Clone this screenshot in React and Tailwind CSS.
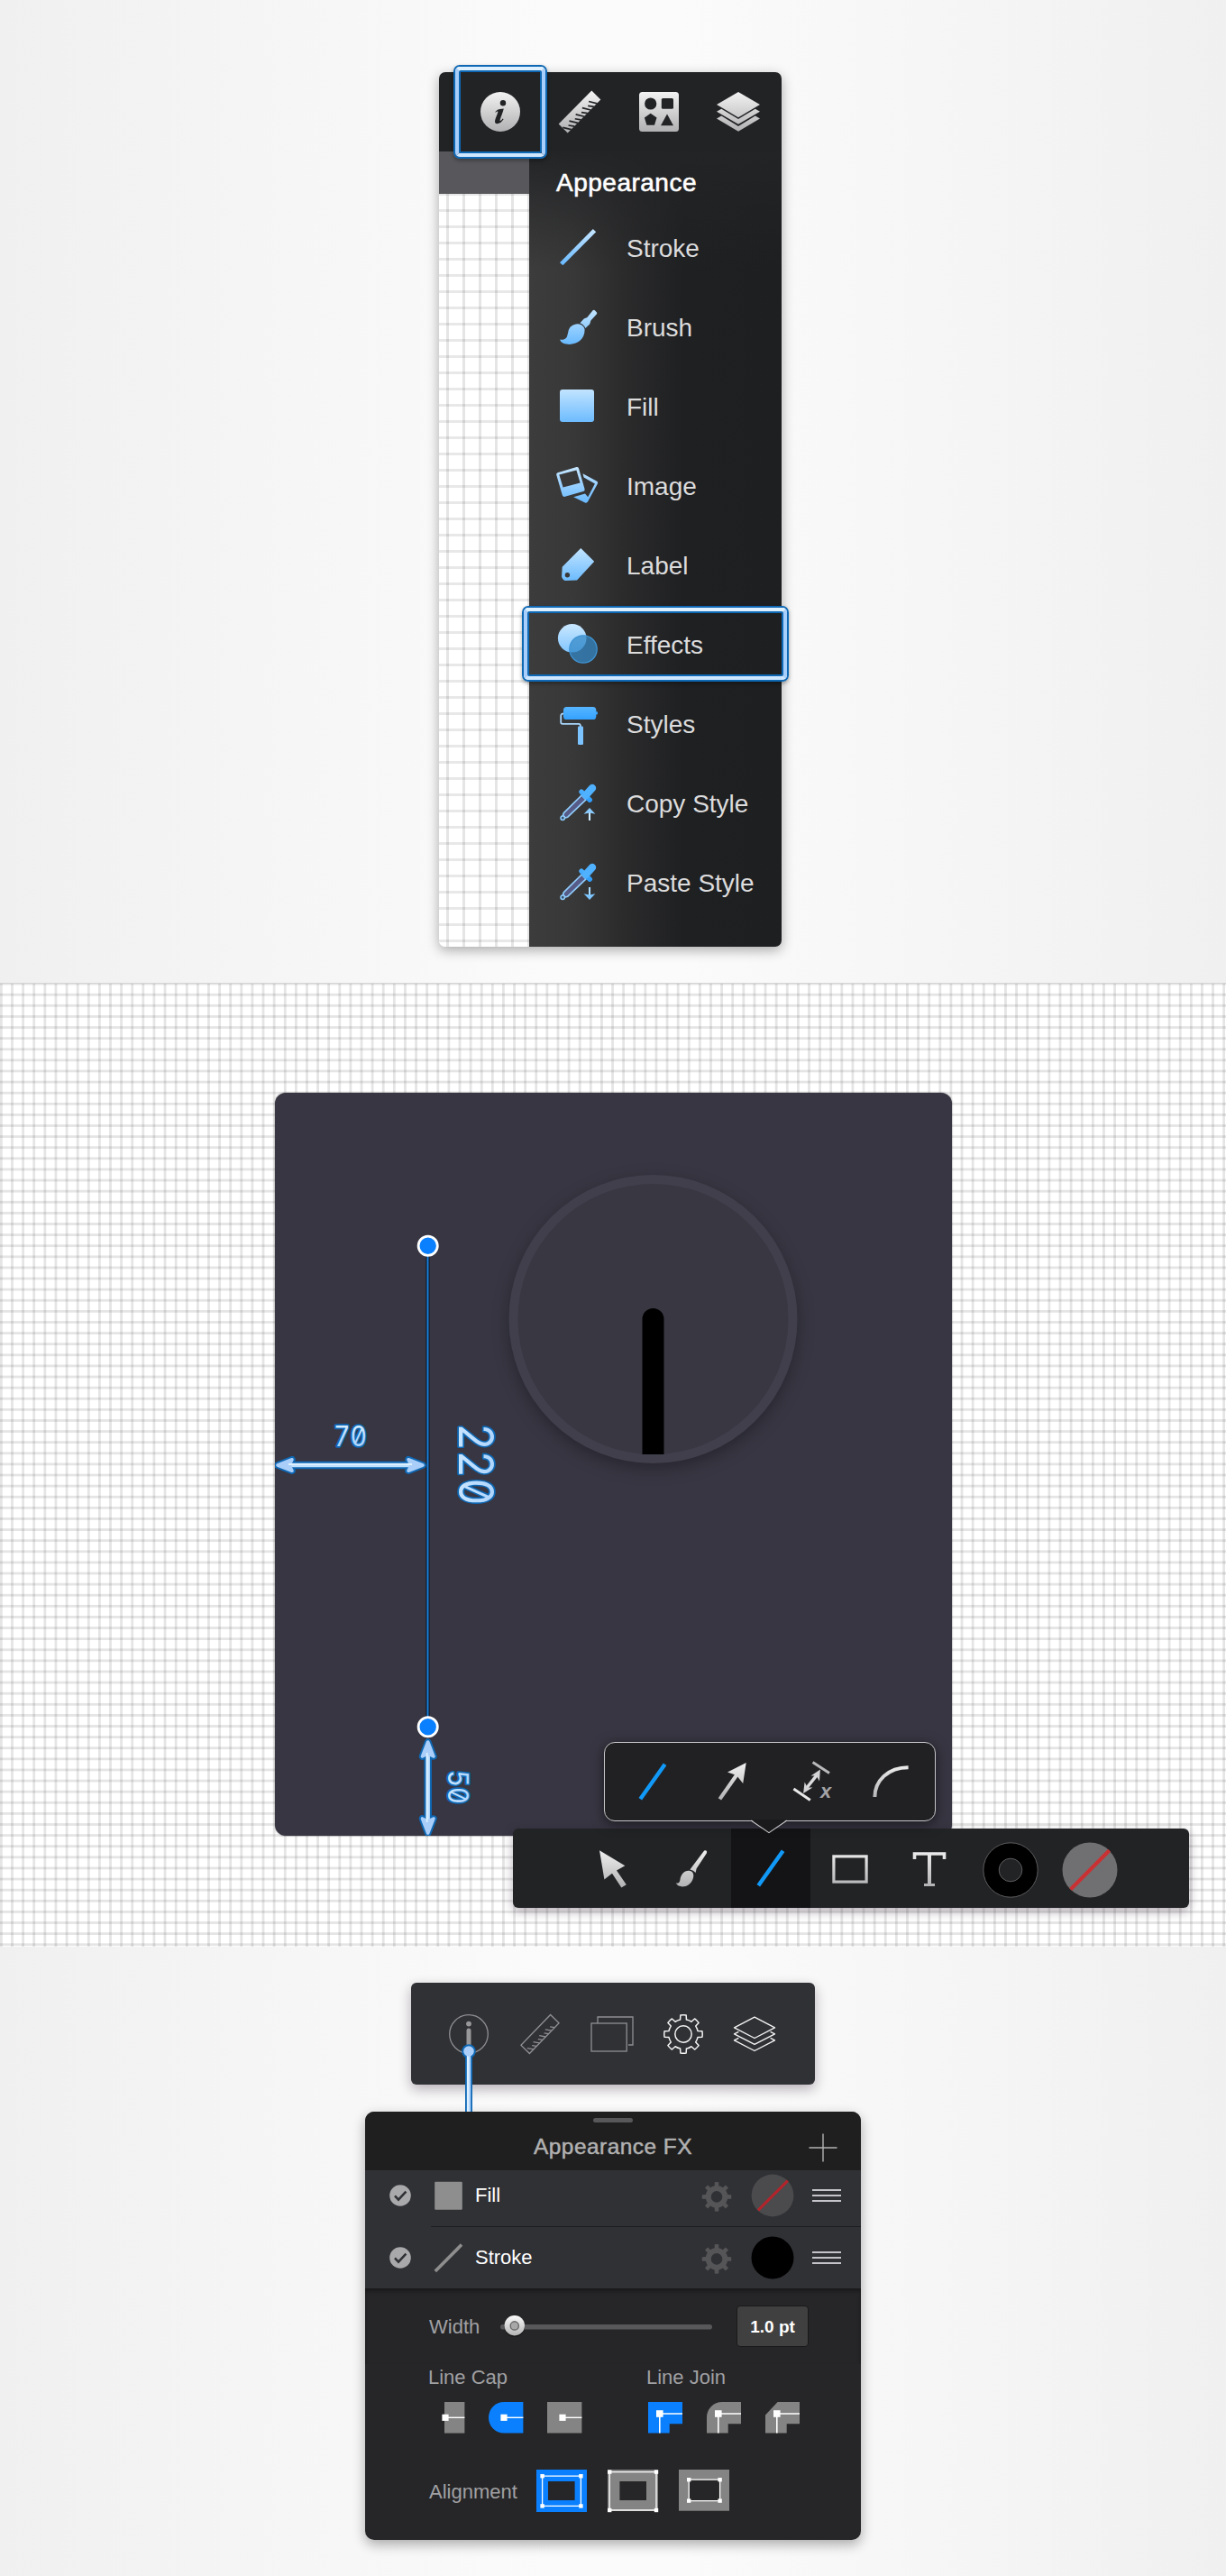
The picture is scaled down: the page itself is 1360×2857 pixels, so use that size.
import React from "react";

const SANS = "font-['Liberation_Sans',Arial,sans-serif]";

function Defs() {
  return (
    <svg width="0" height="0" className="absolute" aria-hidden="true">
      <defs>
        <linearGradient id="silver" gradientUnits="userSpaceOnUse" x1="0" y1="2" x2="0" y2="46">
          <stop offset="0" stopColor="#f2f2f3" />
          <stop offset="1" stopColor="#b0b0b2" />
        </linearGradient>
        <linearGradient id="sky" gradientUnits="userSpaceOnUse" x1="0" y1="4" x2="0" y2="45">
          <stop offset="0" stopColor="#c6e6ff" />
          <stop offset="1" stopColor="#66b8ff" />
        </linearGradient>
        <linearGradient id="azure" gradientUnits="userSpaceOnUse" x1="0" y1="4" x2="0" y2="22">
          <stop offset="0" stopColor="#5cb8ff" />
          <stop offset="1" stopColor="#2f9fff" />
        </linearGradient>
        <linearGradient id="thumb" x1="0" y1="0" x2="0" y2="1">
          <stop offset="0" stopColor="#fbfbfb" />
          <stop offset="1" stopColor="#b4b4b4" />
        </linearGradient>
        <linearGradient id="ice" x1="0" y1="0" x2="0" y2="1">
          <stop offset="0" stopColor="#e6f5ff" />
          <stop offset="0.6" stopColor="#b4d9fd" />
          <stop offset="1" stopColor="#a4ccfa" />
        </linearGradient>
        <linearGradient id="iceSide" x1="0" y1="1" x2="0" y2="0">
          <stop offset="0" stopColor="#cfe9ff" />
          <stop offset="1" stopColor="#a9d1fc" />
        </linearGradient>
      </defs>
    </svg>
  );
}

function Icon({ children, size = 48 }) {
  return (
    <svg width={size} height={size} viewBox={`0 0 ${size} ${size}`} fill="none" className="block shrink-0 overflow-visible">
      {children}
    </svg>
  );
}

/* ---------- top inspector ---------- */

function InfoSolid() {
  return (
    <Icon>
      <circle cx="24" cy="24" r="22" fill="url(#silver)" />
      <circle cx="27" cy="14.3" r="3.2" fill="#222325" />
      <path
        d="M18.3 24.2C20 21.8 22.6 20.7 25.8 20.7L27.8 20.4C27 24.5 24.3 30 23.6 33.2C23.3 34.6 24.4 34.6 26.6 31.6L27.6 32.3C25.4 35.6 22.8 37.3 20.4 37.2C18.2 37.1 17.6 35.5 18.2 33.2C18.9 30.4 20.6 27 21.3 24.6C21.7 23.2 20.4 23.2 18.9 24.8Z"
        fill="#222325"
      />
    </Icon>
  );
}

const SOLID_TICKS = [-20.5, -15.4, -10.3, -5.2, -0.1, 5, 10.1, 15.2, 20.3];

function RulerSolid() {
  return (
    <Icon>
      <path d="M37.3 .5L47.3 10.5L10.7 47.5L.7 37.5Z" fill="url(#silver)" />
      <g transform="translate(24 24) rotate(-45)">
        {SOLID_TICKS.map((x, i) => (
          <path key={x} d={`M${x} 7.3L${x - (i % 2 ? 4 : 5)} ${i % 2 ? 1.8 : -1}`} stroke="#222325" strokeWidth="1.7" />
        ))}
      </g>
    </Icon>
  );
}

function ShapesSolid() {
  return (
    <Icon>
      <rect x="2" y="2" width="44" height="44" rx="3.5" fill="url(#silver)" />
      <g fill="#222325">
        <circle cx="14.7" cy="15" r="6.6" />
        <rect x="26.8" y="9" width="13.2" height="11.8" rx="1.6" />
        <path d="M14.7 25.7L21.5 30.6L19 38.8H10.4L7.9 30.6Z" />
        <path d="M33 26.5L40 39.2H26Z" />
      </g>
    </Icon>
  );
}

function LayersSolid() {
  return (
    <Icon>
      <g fill="url(#silver)">
        <path d="M24 2L48 16L24 30.2L0 16Z" />
        <path d="M0 23.7L5.2 20.7L24 32L42.8 20.7L48 23.7L24 37.8Z" />
        <path d="M0 31.5L5.2 28.5L24 40L42.8 28.5L48 31.5L24 45.8Z" />
      </g>
    </Icon>
  );
}

function StrokeIcon() {
  return (
    <Icon>
      <path d="M5 41.2L41.8 4.1L45.2 7.3L8.4 44.2Z" fill="url(#sky)" />
    </Icon>
  );
}

function BrushIcon() {
  return (
    <Icon>
      <path d="M41.6 6.2Q42.6 5.4 43.6 6L46 8.4Q46.6 9.4 45.8 10.4L39.4 17.6L38.2 21.4L33.4 26Q32 22.2 27.4 20.3L31.8 15.6L35.4 14Z" fill="url(#sky)" />
      <path d="M26.2 21.4C30 22 32.5 24.5 32.6 28C32.6 38 24.5 43.8 15.5 43.9C10.5 43.9 6.6 43 5 38.6C8 39.2 11.6 38.3 12.9 35.4C14.6 31.4 14 26.5 17.8 23.8C20.2 22 23.2 21 26.2 21.4Z" fill="url(#sky)" />
    </Icon>
  );
}

function FillIcon() {
  return (
    <Icon>
      <rect x="5" y="6" width="38" height="36" rx="3" fill="url(#sky)" />
    </Icon>
  );
}

function ImageIcon() {
  return (
    <Icon>
      <path
        fillRule="evenodd"
        d="M2.5 10.2L23.5 4.1Q25.4 3.7 26 5.5L32.6 28.4Q33 30.4 31 31L10.8 36.8Q8.6 37.3 7.8 35.2L1.2 12.6Q.9 10.8 2.5 10.2ZM4.3 12.5L8.6 26.6L27.6 21.4L23.4 7.4Z"
        fill="url(#sky)"
      />
      <path d="M30.5 11.2L46.2 19.8Q47.8 20.8 46.9 22.4L36 42.6Q34.8 44.3 33 43.4L20.2 37.2L33 33.6L36.2 37.2L43.9 22.6L31.6 15.6Z" fill="url(#sky)" />
    </Icon>
  );
}

function LabelIcon() {
  return (
    <Icon>
      <path fillRule="evenodd" d="M28.3 6L43.2 20.7L24 41.4L11.4 42.1Q10 42.1 9 41L7.6 39Q7 38 7.1 37L7.7 26.7ZM13.4 33A2.7 2.7 0 1 0 13.4 38.4A2.7 2.7 0 1 0 13.4 33Z" fill="url(#sky)" />
    </Icon>
  );
}

function EffectsIcon() {
  return (
    <Icon>
      <circle cx="18.7" cy="17.8" r="15.8" fill="url(#sky)" />
      <circle cx="31" cy="30" r="15.2" fill="#3388c8" fillOpacity=".74" stroke="#3f94d4" strokeWidth="1.3" />
    </Icon>
  );
}

function StylesIcon() {
  return (
    <Icon>
      <path d="M9.5 13.3Q6.2 13.3 6.2 16V23Q6.2 24.9 8 24.9H26Q28 24.9 28 28" stroke="#a9d6fb" strokeWidth="1.8" />
      <rect x="44" y="11.2" width="3" height="3.4" rx="1" fill="#3aa5ff" />
      <rect x="9" y="6" width="36.3" height="14" rx="3.6" fill="url(#azure)" />
      <rect x="25" y="27.6" width="6" height="20.4" rx="1.2" fill="#7cc4ff" />
    </Icon>
  );
}

function Dropper({ down }) {
  return (
    <Icon>
      <path d="M29.2 16L9.4 35.6L8.4 38.4L11.2 41L13.8 40.2L34 20.8Z" fill="#565c87" stroke="#8fcbfb" strokeWidth="1.7" strokeLinejoin="round" />
      <circle cx="8.2" cy="41.2" r="2.2" fill="#35506b" stroke="#8fcbfb" strokeWidth="1.5" />
      <path d="M29 12.2L38.3 21.2" stroke="url(#azure)" strokeWidth="5.4" strokeLinecap="round" />
      <path d="M41 8L33.8 16" stroke="#4fb1ff" strokeWidth="8.4" strokeLinecap="round" />
      {down ? (
        <g>
          <path d="M38 30V40" stroke="#a6dbff" strokeWidth="2.1" />
          <path d="M31.6 37.2L38 38.4L44.4 37.2L38 44Z" fill="#7cc5ff" />
        </g>
      ) : (
        <g>
          <path d="M38 34V44" stroke="#cdebff" strokeWidth="2.1" />
          <path d="M31.6 36.8L38 35.6L44.4 36.8L38 30Z" fill="#8accff" />
        </g>
      )}
    </Icon>
  );
}

const MENU = [
  { label: "Stroke", icon: <StrokeIcon /> },
  { label: "Brush", icon: <BrushIcon /> },
  { label: "Fill", icon: <FillIcon /> },
  { label: "Image", icon: <ImageIcon /> },
  { label: "Label", icon: <LabelIcon /> },
  { label: "Effects", icon: <EffectsIcon />, active: true },
  { label: "Styles", icon: <StylesIcon /> },
  { label: "Copy Style", icon: <Dropper /> },
  { label: "Paste Style", icon: <Dropper down /> },
];

function Ring({ className }) {
  return (
    <div className={`pointer-events-none absolute rounded-[7px] border-2 border-[#0f68b4] shadow-[0_2px_4px_rgba(0,0,0,.35)] ${className}`}>
      <div className="h-full rounded-[5px] border-4 border-x-[#a8cffb] border-t-[#dff1ff] border-b-[#cfe6ff]">
        <div className="h-full rounded-[2px] border-2 border-[#0f68b4]" />
      </div>
    </div>
  );
}

function Cell({ children, className = "w-[88px]" }) {
  return <div className={`flex items-center justify-center ${className}`}>{children}</div>;
}

function Inspector() {
  return (
    <div className="flex h-[970px] w-[380px] flex-col rounded-[7px] shadow-[0_4px_14px_rgba(0,0,0,.32)]">
      <div className="flex h-[88px] rounded-t-[7px] bg-[#222325] pl-6">
        <Cell className="relative w-[88px]">
          <InfoSolid />
          <Ring className="-top-2 -left-2 h-[104px] w-[104px]" />
        </Cell>
        <Cell><RulerSolid /></Cell>
        <Cell><ShapesSolid /></Cell>
        <Cell><LayersSolid /></Cell>
      </div>
      <div className="flex flex-1">
        <div className="flex w-[100px] flex-col overflow-hidden rounded-bl-[7px]">
          <div className="h-[47px] bg-[#58585c]" />
          <div className="flex-1 bg-white bg-[linear-gradient(to_right,rgba(0,0,0,.1)_3px,transparent_3px),linear-gradient(to_bottom,rgba(0,0,0,.09)_3px,transparent_3px)] bg-size-[18px_18px] bg-position-[8px_17px]" />
        </div>
        <div className="w-[280px] rounded-br-[7px] bg-[linear-gradient(to_right,#3c3c3c_0,#383838_50px,#2b2b2c_105px,#1f2022_170px,#1e1f21_100%)]">
          <div className="h-full rounded-br-[7px] bg-[linear-gradient(to_bottom,#232426_0,rgba(35,36,38,.5)_60px,transparent_130px)]">
            <h2 className="flex h-[62px] items-center pt-[7px] pl-[30px] text-[28px] leading-none tracking-[.5px] text-white [-webkit-text-stroke:.6px_white]">
              Appearance
            </h2>
            <ul>
              {MENU.map((m) => (
                <li key={m.label} className="relative flex h-[88px] items-center pl-[29px]">
                  {m.icon}
                  <span className="pt-[3px] pl-[31px] text-[28px] leading-none whitespace-nowrap text-[#dcdcdd]">{m.label}</span>
                  {m.active && <Ring className="top-[2px] -left-2 h-[84px] w-[296px]" />}
                </li>
              ))}
            </ul>
          </div>
        </div>
      </div>
    </div>
  );
}

/* ---------- canvas ---------- */

function DimArrow({ x, y, length, vertical }) {
  const l = length;
  const d = `M10 0H${l - 10}`;
  const heads = `M2 0L18 -6.2L15 0L18 6.2ZM${l - 2} 0L${l - 18} -6.2L${l - 15} 0L${l - 18} 6.2Z`;
  return (
    <g transform={`translate(${x} ${y})${vertical ? " rotate(90)" : ""}`} strokeLinejoin="round">
      <path d={d} stroke="#0f68b4" strokeWidth="8.5" />
      <path d={heads} stroke="#0f68b4" strokeWidth="7.6" />
      <path d={d} stroke="#bfe0ff" strokeWidth="4.4" />
      <path d={heads} fill="#a9cef9" stroke="#a9cef9" strokeWidth="3.6" />
      <path d={`M14 ${vertical ? 1 : -1}H${l - 14}`} stroke="#dcf0ff" strokeWidth="1.8" />
    </g>
  );
}

function DimText({ x, y, size, length, rotate, children }) {
  return (
    <text
      transform={`translate(${x} ${y})${rotate ? " rotate(90)" : ""}`}
      fontSize={size}
      textLength={length}
      lengthAdjust="spacingAndGlyphs"
      fill={rotate ? "url(#iceSide)" : "url(#ice)"}
      stroke="#0f68b4"
      strokeWidth="3.6"
      strokeLinejoin="round"
      className="font-['Inter',sans-serif] [font-feature-settings:'zero'_1,'tnum'_1] [paint-order:stroke]"
    >
      {children}
    </text>
  );
}

function Artboard() {
  return (
    <div className="h-[824px] w-[751px] overflow-hidden rounded-[12px] bg-[#373642] shadow-[0_0_2px_rgba(0,0,0,.5)]">
      <svg width="751" height="824" viewBox="304.5 1212 751 824" fill="none" className="block">
        <g className="[filter:drop-shadow(0_6px_9px_rgba(0,0,0,.28))]">
          <circle cx="724" cy="1463" r="155" fill="#393742" stroke="#403f4b" strokeWidth="10" />
        </g>
        <path d="M712 1613V1463A12 12 0 0 1 736 1463V1613Z" fill="#000" />
        <path d="M474 1382V1915" stroke="#0b1420" strokeWidth="4" />
        <path d="M474 1382V1915" stroke="#1c7fdc" strokeWidth="2" />
        <g fill="#0a80ff" stroke="#fff" strokeWidth="2.8">
          <circle cx="474.2" cy="1381.7" r="10.6" />
          <circle cx="474.2" cy="1915.3" r="10.6" />
        </g>
        <DimArrow x="305.5" y="1625" length={165} />
        <DimArrow x="474.2" y="1930" length={105} vertical />
        <DimText x="369.5" y="1603.5" size="31" length="37">70</DimText>
        <DimText x="508" y="1578.5" size="53" length="91" rotate>220</DimText>
        <DimText x="496.5" y="1963" size="31" length="38" rotate>50</DimText>
      </svg>
    </div>
  );
}

function LineTool() {
  return (
    <Icon>
      <path d="M10.3 43.3L37.6 4.8" stroke="#1199f7" strokeWidth="4.4" />
    </Icon>
  );
}

function Popover() {
  return (
    <div className="absolute -top-24 left-[101px] flex h-[88px] w-[368px] rounded-[12px] border border-[#c6c6c8] bg-[#212123] px-[9px] shadow-[0_3px_14px_rgba(0,0,0,.5)]">
      <Cell className="w-[88px] flex-none"><LineTool /></Cell>
      <Cell className="w-[88px] flex-none">
        <Icon>
          <path d="M10.4 43.4L29.6 16" stroke="url(#silver)" strokeWidth="4.2" />
          <path d="M39.7 3L19 13.6L29 17L36.2 26Z" fill="url(#silver)" />
        </Icon>
      </Cell>
      <Cell className="w-[88px] flex-none">
        <Icon>
          <path d="M25.6 2.6L44 14.6" stroke="#b9b9bb" strokeWidth="3" />
          <path d="M4.4 32L22.8 44.4" stroke="#e9e9ea" strokeWidth="3" />
          <path d="M18 32L31 15.6" stroke="#dcdcde" strokeWidth="3.4" />
          <path d="M33.9 10.4L23.6 17.4L29.6 17.6L33 23.4ZM15.1 37L25.4 30.4L19.6 30.4L16.6 24.4Z" fill="#d4d4d6" />
          <text x="34" y="41.6" fontSize="22" fontWeight="700" fontStyle="italic" fill="#a3a3a6">x</text>
        </Icon>
      </Cell>
      <Cell className="w-[88px] flex-none">
        <Icon>
          <path d="M6.4 41C6.4 23 21 8.2 43.6 8.2" stroke="url(#silver)" strokeWidth="4" />
        </Icon>
      </Cell>
      <svg width="42" height="16" viewBox="0 0 42 16" fill="none" className="absolute -bottom-[15px] left-[161px]">
        <path d="M1 0L21 14.2L41 0Z" fill="#1a1a1c" />
        <path d="M1 1L21 14.6L41 1" stroke="#c6c6c8" strokeWidth="1.1" />
      </svg>
    </div>
  );
}

function ToolBar() {
  return (
    <div className="relative -mt-2 ml-[569px] flex h-[88px] w-[750px] self-start rounded-[6px] bg-[#222325] pl-[66px] shadow-[0_4px_12px_rgba(40,20,40,.35)]">
      <Cell>
        <Icon>
          <path d="M10 4.2L38.3 21.3L29 26.4L39.8 42.2L34.3 45.4L24 29.8L15.4 36.6Z" fill="url(#silver)" />
        </Icon>
      </Cell>
      <Cell>
        <Icon>
          <path d="M37.4 5.4Q38.6 3.6 40.4 4.6Q41.8 5.8 40.8 7.6L29.6 24.6L28.6 29Q26.4 26.6 22.4 25.6L25.2 21.8Z" fill="url(#silver)" />
          <path d="M21.4 26.8C25 27.2 26.8 29.6 26.2 33.4C25.2 40 20 44.4 14 44.4C10.6 44.4 8.4 43.4 6.8 40.6C9.6 41 11 40 11.4 37C12.2 31 15.6 26.6 21.4 26.8Z" fill="url(#silver)" />
        </Icon>
      </Cell>
      <Cell className="w-[88px] bg-[#141416]"><LineTool /></Cell>
      <Cell>
        <Icon>
          <rect x="5.9" y="10.9" width="36.2" height="28.2" stroke="url(#silver)" strokeWidth="3.2" />
        </Icon>
      </Cell>
      <Cell>
        <Icon>
          <path d="M7.5 14V8H40.5V14" stroke="url(#silver)" strokeWidth="3.6" />
          <rect x="22" y="7" width="4" height="35" fill="url(#silver)" />
          <rect x="18" y="41" width="12" height="3" fill="#b4b4b6" />
        </Icon>
      </Cell>
      <Cell className="w-[92px] pt-1">
        <Icon size={62}>
          <circle cx="31" cy="31" r="30.2" fill="#000" stroke="#5c5c5e" />
          <circle cx="31" cy="31" r="12.8" fill="#222325" stroke="#5c5c5e" />
        </Icon>
      </Cell>
      <Cell className="w-[84px] pt-1">
        <Icon size={62}>
          <circle cx="31" cy="31" r="30.5" fill="#707073" />
          <path d="M9.6 52.6L52.6 9.2" stroke="#c93132" strokeWidth="4.2" />
        </Icon>
      </Cell>
      <Popover />
    </div>
  );
}

/* ---------- FX panel ---------- */

function gearPath(c, outer, root, teeth, halfTop, halfBase) {
  const p = (r, deg) => {
    const a = (deg * Math.PI) / 180;
    return `${(c + r * Math.sin(a)).toFixed(2)} ${(c - r * Math.cos(a)).toFixed(2)}`;
  };
  const step = 360 / teeth;
  let d = "";
  for (let i = 0; i < teeth; i++) {
    const a = i * step;
    d += `${i ? "L" : "M"}${p(root, a - halfBase)}L${p(outer, a - halfTop)}A${outer} ${outer} 0 0 1 ${p(outer, a + halfTop)}L${p(root, a + halfBase)}`;
    d += `A${root} ${root} 0 0 1 ${p(root, a + step - halfBase)}`;
  }
  return d + "Z";
}

const OUTLINE_TICKS = [-17, -12.2, -7.4, -2.6, 2.2, 7, 11.8, 16.6];

function OutlineBar() {
  return (
    <div className="relative flex h-[113px] w-[448px] items-center rounded-[6px] bg-[#303135] pl-[24.5px] shadow-[0_5px_14px_rgba(40,20,40,.32)]">
      <Cell className="w-[79.3px]">
        <Icon>
          <circle cx="24" cy="24" r="21.3" stroke="#8f8f92" strokeWidth="1.3" />
          <circle cx="24" cy="12.6" r="2.9" fill="#98989b" />
          <path d="M24 20V38" stroke="#98989b" strokeWidth="5" strokeLinecap="round" />
        </Icon>
      </Cell>
      <Cell className="w-[79.3px]">
        <Icon>
          <g transform="translate(24 24) rotate(-46)" stroke="#8f8f92" strokeWidth="1.3">
            <rect x="-23.5" y="-6.6" width="47" height="13.2" />
            {OUTLINE_TICKS.map((x, i) => (
              <path key={x} d={`M${x} 6.6L${x - (i % 2 ? 3 : 4)} ${i % 2 ? 2.4 : 0.6}`} />
            ))}
          </g>
        </Icon>
      </Cell>
      <Cell className="w-[79.3px]">
        <Icon>
          <g stroke="#8f8f92" strokeWidth="1.3">
            <rect x="1" y="12" width="39.2" height="31" />
            <path d="M8 12V5H47V36H42" />
          </g>
        </Icon>
      </Cell>
      <Cell className="w-[79.3px]">
        <Icon>
          <path d={gearPath(24, 21.2, 16.4, 8, 8.6, 12)} stroke="#f3f3f3" strokeWidth="1.5" strokeLinejoin="round" />
          <circle cx="24" cy="24" r="9.2" stroke="#f3f3f3" strokeWidth="1.5" />
        </Icon>
      </Cell>
      <Cell className="w-[79.3px]">
        <Icon>
          <g stroke="#f3f3f3" strokeWidth="1.4" strokeLinejoin="round">
            <path d="M24 5.2L46.5 16.9L24 28.5L1.5 16.9Z" />
            <path d="M6.4 21.3L1.5 23.8L24 35.4L46.5 23.8L41.6 21.3" />
            <path d="M6.4 28.4L1.5 30.9L24 42.5L46.5 30.9L41.6 28.4" />
          </g>
        </Icon>
      </Cell>
      <svg width="16" height="76" viewBox="0 0 16 76" fill="none" className="absolute top-[68px] left-[56px]">
        <path d="M8 8V75" stroke="#0f68b4" strokeWidth="8" />
        <circle cx="8" cy="8" r="7.8" fill="#0f68b4" />
        <path d="M8 8V75" stroke="#b2d6fd" strokeWidth="4.4" />
        <path d="M7 12V75" stroke="#e2f3ff" strokeWidth="1.8" />
        <circle cx="8" cy="8" r="5.8" fill="#abcff9" />
      </svg>
    </div>
  );
}

function FxRow({ label, icon, swatch, className }) {
  return (
    <div className={`flex items-center bg-[#303135] pl-[27px] ${className}`}>
      <Icon size={24}>
        <circle cx="12" cy="12" r="11.8" fill="#a9a9ab" />
        <path d="M6 12.4L10 16.6L18.4 7.6" stroke="#303135" strokeWidth="2.6" />
      </Icon>
      <div className="ml-[25px] flex">{icon}</div>
      <span className="ml-[14px] flex-1 text-[22px] leading-none text-white">{label}</span>
      <Icon size={34}>
        <path fillRule="evenodd" d={`${gearPath(17, 16.3, 12.3, 8, 8, 11)}M17 10.7A6.3 6.3 0 1 0 17 23.3A6.3 6.3 0 1 0 17 10.7Z`} transform="translate(0 1.4)" fill="#555557" />
      </Icon>
      <div className="ml-[21px]">{swatch}</div>
      <div className="mr-[22px] ml-[20px] flex w-8 flex-col gap-[4px]">
        <div className="h-[2px] bg-[#c4c3ca]" />
        <div className="h-[2px] bg-[#c4c3ca]" />
        <div className="h-[2px] bg-[#c4c3ca]" />
      </div>
    </div>
  );
}

function CapIcon({ shape, fill, dot }) {
  return (
    <svg width="38.4" height="34.6" viewBox="0 0 38.4 34.6" fill="none" className="block overflow-visible">
      <path d={shape} fill={fill} />
      <path d={`M${dot} 17.3H38.4`} stroke="#fff" strokeWidth="1.4" />
      <rect x={dot - 3.6} y="13.7" width="7.2" height="7.2" fill="#fff" />
    </svg>
  );
}

function JoinIcon({ shape, fill }) {
  return (
    <svg width="38.4" height="34.6" viewBox="0 0 38.4 34.6" fill="none" className="block">
      <path d={shape} fill={fill} />
      <path d="M12.8 34.6V13H38.4" stroke="#fff" strokeWidth="1.6" />
      <rect x="9" y="9.2" width="7.6" height="7.6" fill="#fff" />
    </svg>
  );
}

function AlignIcon({ fill, box, hole }) {
  const [x1, y1, x2, y2] = box;
  return (
    <svg width="56" height="47" viewBox="0 0 56 47" fill="none" className="block overflow-visible">
      <path d={fill === "#0a80ff" ? "M0 0H56V47H0Z" : "M0 0H56V45.8H0Z"} fill={fill} />
      <path d={hole} fill="#262628" />
      <path d={`M${x1} ${y1}H${x2}V${y2}H${x1}Z`} stroke="#fff" strokeWidth="1.3" />
      {[[x1, y1], [x2, y1], [x1, y2], [x2, y2]].map(([x, y]) => (
        <rect key={`${x}-${y}`} x={x - 2.2} y={y - 2.2} width="4.4" height="4.4" fill="#fff" />
      ))}
    </svg>
  );
}

function FxPanel() {
  return (
    <div className="mt-[30px] flex h-[475px] w-[550px] flex-col overflow-hidden rounded-[10px] bg-[#262628] text-[22px] leading-none text-[#a0a0a3] shadow-[0_5px_14px_rgba(0,0,0,.32)]">
      <div className="grid h-[65px] grid-cols-[1fr_auto_1fr] bg-[#1f1f1f]">
        <div className="col-start-2 flex flex-col items-center pt-[7px]">
          <div className="h-[4.5px] w-11 rounded-full bg-[#58585a]" />
          <h3 className="pt-[15px] text-[24.4px] leading-none tracking-[.5px] text-[#b1b1b1] [-webkit-text-stroke:.5px_#b1b1b1]">Appearance FX</h3>
        </div>
        <div className="flex items-center justify-end pt-[14px] pr-[26px]">
          <Icon size={32}>
            <path d="M16 .5V31.5M.5 16H31.5" stroke="#b4b4b4" strokeWidth="1.4" />
          </Icon>
        </div>
      </div>
      <FxRow
        label="Fill"
        className="h-[62px] pb-[7px]"
        icon={<Icon size={32}><rect x="1.2" y=".8" width="30.6" height="31" rx="1" fill="#8e8e8e" /></Icon>}
        swatch={
          <Icon size={48}>
            <circle cx="24" cy="24" r="23.4" fill="#4b4b4d" />
            <path d="M8 40.4L40.8 7.6" stroke="#b3242b" strokeWidth="3" />
          </Icon>
        }
      />
      <div className="flex h-px bg-[#303135] pl-[73px]">
        <div className="flex-1 bg-[#1d1d1f]" />
      </div>
      <FxRow
        label="Stroke"
        className="h-[68px]"
        icon={<Icon size={32}><path d="M1.8 31L31 1.6" stroke="#8e8e8e" strokeWidth="3.6" /></Icon>}
        swatch={<Icon size={48}><circle cx="24" cy="24" r="23.5" fill="#000" /></Icon>}
      />
      <div className="flex h-[84px] items-center pl-[71px] shadow-[inset_0_3px_4px_rgba(0,0,0,.35)]">
        <span className="w-[78px] pt-px">Width</span>
        <svg width="242" height="30" viewBox="0 0 242 30" fill="none" className="block overflow-visible">
          <rect x="1" y="13" width="235" height="5.6" rx="2.8" fill="#58585a" />
          <circle cx="16.8" cy="15.6" r="11.2" fill="#000" fillOpacity=".5" />
          <circle cx="16.8" cy="14.2" r="11.2" fill="url(#thumb)" />
          <circle cx="16.8" cy="14.4" r="4.6" fill="#a8a8a8" stroke="#6a6a6a" strokeWidth="1.4" />
        </svg>
        <div className="ml-[21px] flex h-[46px] w-[80px] items-center justify-center rounded-[4px] border border-[#19191a] bg-[#404040] text-[19px] font-bold text-white">
          1.0 pt
        </div>
      </div>
      <div className="flex pl-[70px]">
        <div className="w-[242px]">
          <p className="pt-[4px]">Line Cap</p>
          <div className="flex gap-[26.4px] pt-[16px] pl-[2px]">
            <CapIcon shape="M16 0H38.4V34.6H16Z" fill="#848484" dot={17} />
            <CapIcon shape="M17 0H38.4V34.6H17A17 17.3 0 0 1 17 0Z" fill="#0a80ff" dot={17} />
            <CapIcon shape="M0 0H38.4V34.6H0Z" fill="#848484" dot={17} />
          </div>
        </div>
        <div>
          <p className="pt-[4px]">Line Join</p>
          <div className="flex gap-[26.4px] pt-[16px] pl-[2px]">
            <JoinIcon shape="M0 0H38.4V24.2H23.7V34.6H0Z" fill="#0a80ff" />
            <JoinIcon shape="M17 0H38.4V24.2H23.7V34.6H0V17A17 17 0 0 1 17 0Z" fill="#848484" />
            <JoinIcon shape="M13.6 0H38.4V24.2H23.7V34.6H0V14.4Z" fill="#848484" />
          </div>
        </div>
      </div>
      <div className="flex items-start pt-[40px] pl-[71px]">
        <span className="w-[119px] pt-[14px]">Alignment</span>
        <div className="flex gap-[23px]">
          <AlignIcon fill="#0a80ff" box={[6.6, 7.2, 49.4, 40.4]} hole="M13 13H42.6V34H13Z" />
          <AlignIcon fill="#848484" box={[2.2, 2.6, 54, 45]} hole="M13.4 13H43V34H13.4Z" />
          <AlignIcon fill="#848484" box={[11.2, 11.2, 45.6, 34.6]} hole="M11.2 11.2H45.6V34.6H11.2Z" />
        </div>
      </div>
    </div>
  );
}

export default function App() {
  return (
    <main className={`w-[1360px] overflow-hidden bg-[linear-gradient(to_right,#f0f0f0,#fbfbfb_45%,#fbfbfb_55%,#f0f0f0)] ${SANS}`}>
      <Defs />
      <section className="flex h-[1090px] justify-center pt-20 pr-[6px]">
        <Inspector />
      </section>
      <section className="flex h-[1069px] flex-col items-center border-t border-[#d4d4d4] bg-white bg-[linear-gradient(to_right,rgba(0,0,0,.1)_2.8px,transparent_2.8px),linear-gradient(to_bottom,rgba(0,0,0,.1)_2.8px,transparent_2.8px)] bg-size-[12.12px_12.116px] bg-position-[0px_10.8px] pt-[121px]">
        <Artboard />
        <ToolBar />
      </section>
      <section className="flex h-[698px] flex-col items-center pt-10">
        <OutlineBar />
        <FxPanel />
      </section>
    </main>
  );
}
